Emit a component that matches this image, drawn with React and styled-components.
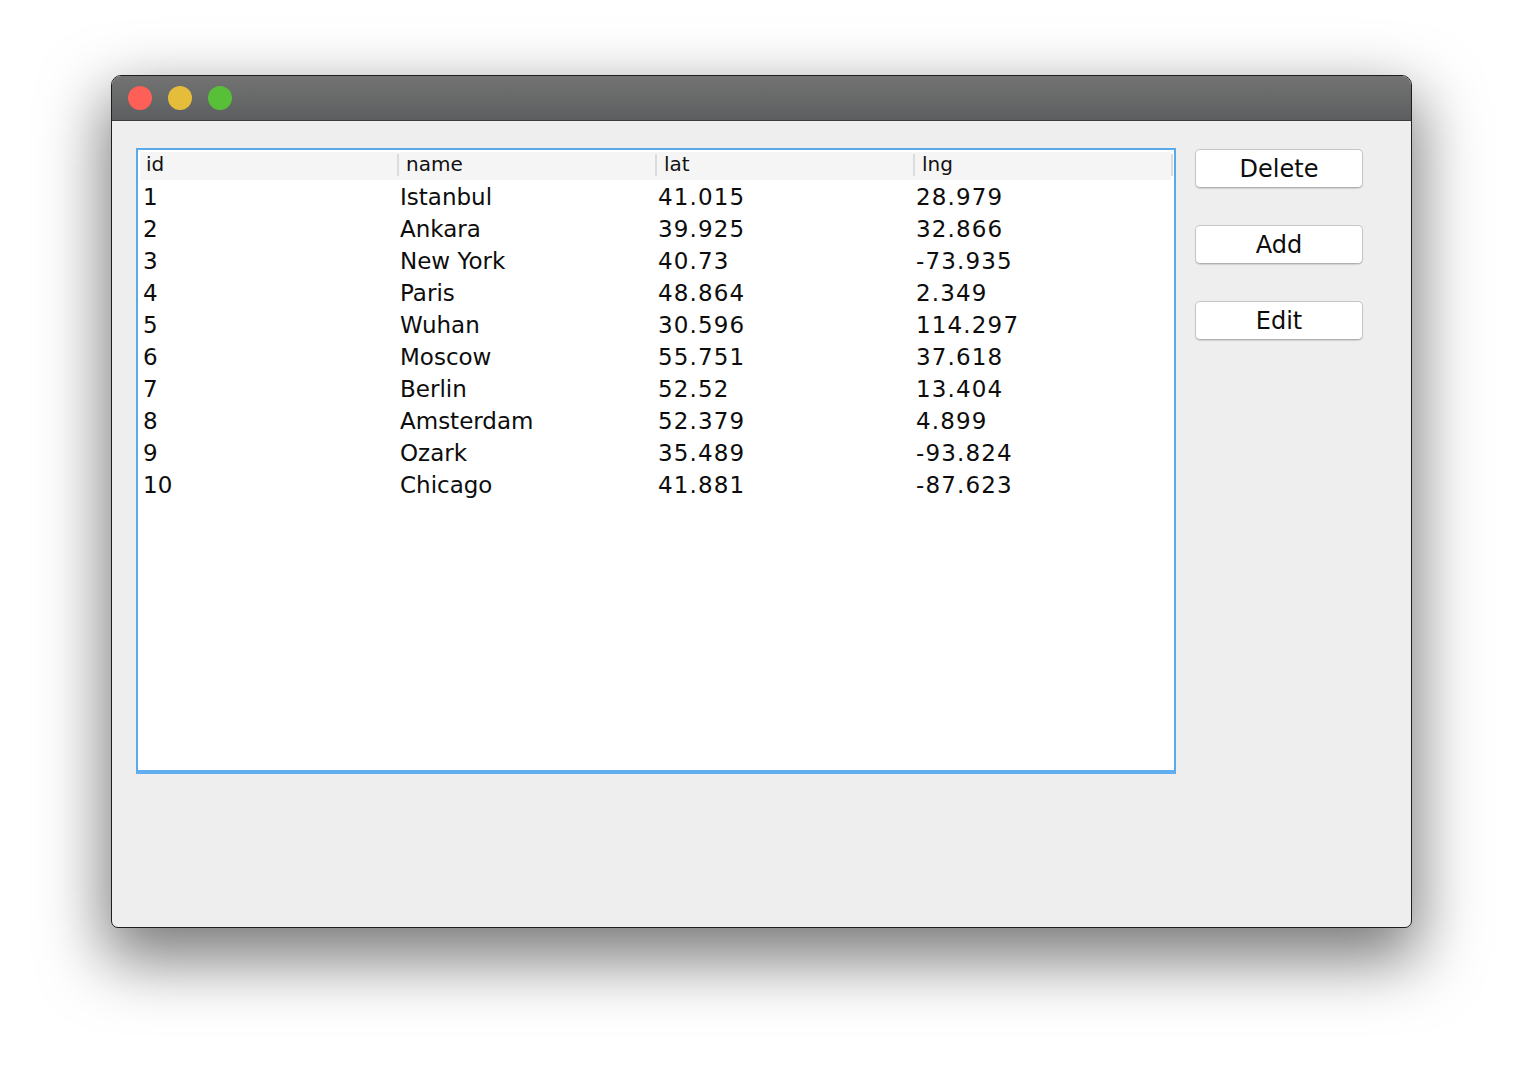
import React from "react";
import styled, { createGlobalStyle } from "styled-components";

const Global = createGlobalStyle`
  html, body { margin: 0; padding: 0; background: #ffffff; }
  body { font-family: "DejaVu Sans", "Liberation Sans", sans-serif; }
`;

const Page = styled.div`
  width: 1524px;
  height: 1076px;
  padding: 75px 0 0 111px;
  box-sizing: border-box;
`;

const Window = styled.div`
  width: 1301px;
  height: 853px;
  box-sizing: border-box;
  border: 1px solid #1e1e1e;
  border-radius: 10px 10px 7px 7px;
  overflow: hidden;
  background: #eeeeee;
  box-shadow: 0 26px 64px 6px rgba(0, 0, 0, 0.52);
  display: flex;
  flex-direction: column;
`;

const TitleBar = styled.div`
  height: 45px;
  flex: none;
  background: linear-gradient(#737373, #5d5e5f);
  border-bottom: 1px solid #3c3c3c;
  display: flex;
  align-items: center;
  gap: 16px;
  padding-left: 16px;
  box-sizing: border-box;
`;

const Light = styled.span`
  width: 24px;
  height: 24px;
  border-radius: 50%;
  background: ${(p) => p.$c};
`;

const Content = styled.div`
  display: flex;
  align-items: flex-start;
  gap: 19px;
  padding: 27px 0 0 24px;
`;

const TableFrame = styled.div`
  width: 1040px;
  height: 626px;
  box-sizing: border-box;
  border: 2px solid #5aa9e9;
  border-bottom: 4px solid #60aef0;
  background: #ffffff;
  padding: 2px 0 0 0;
`;

const Header = styled.div`
  display: grid;
  grid-template-columns: 259px 258px 258px 258px;
  height: 28px;
  margin: 0 2px 0 2px;
  background: #f5f5f5;
  width: 1031px;
`;

const HeadCell = styled.div`
  font-size: 20px;
  color: #111;
  line-height: 25px;
  padding-left: ${(p) => p.$pad}px;
  position: relative;
  &::after {
    content: "";
    position: absolute;
    right: 0;
    top: 2px;
    bottom: 4px;
    width: 2px;
    background: #dcdcdc;
  }
`;

const Row = styled.div`
  display: grid;
  grid-template-columns: 259px 258px 258px 258px;
  height: 32px;
  margin-left: 1px;
`;

const Cell = styled.div`
  font-size: 23px;
  line-height: 35px;
  height: 32px;
  color: #0d0d0d;
  padding-left: ${(p) => p.$pad}px;
  letter-spacing: ${(p) => (p.$num ? "1.15px" : "0")};
  white-space: nowrap;
`;

const Side = styled.div`
  display: flex;
  flex-direction: column;
  gap: 37px;
  padding-top: 1px;
`;

const Button = styled.button`
  width: 168px;
  height: 39px;
  box-sizing: border-box;
  background: #ffffff;
  border: 1px solid #c6c6c6;
  border-bottom-color: #b0b0b0;
  border-radius: 5px;
  box-shadow: 0 1px 1px rgba(0, 0, 0, 0.12);
  font-family: "DejaVu Sans", "Liberation Sans", sans-serif;
  font-size: 24px;
  color: #0d0d0d;
  padding: 1px 0 0 0;
  line-height: 37px;
`;

const rows = [
  [1, "Istanbul", "41.015", "28.979"],
  [2, "Ankara", "39.925", "32.866"],
  [3, "New York", "40.73", "-73.935"],
  [4, "Paris", "48.864", "2.349"],
  [5, "Wuhan", "30.596", "114.297"],
  [6, "Moscow", "55.751", "37.618"],
  [7, "Berlin", "52.52", "13.404"],
  [8, "Amsterdam", "52.379", "4.899"],
  [9, "Ozark", "35.489", "-93.824"],
  [10, "Chicago", "41.881", "-87.623"],
];

export default function App() {
  return (
    <>
      <Global />
      <Page>
        <Window>
          <TitleBar>
            <Light $c="#fe5f57" />
            <Light $c="#e6bd3a" />
            <Light $c="#57c038" />
          </TitleBar>
          <Content>
            <TableFrame>
              <Header>
                <HeadCell $pad={6}>id</HeadCell>
                <HeadCell $pad={7}>name</HeadCell>
                <HeadCell $pad={7}>lat</HeadCell>
                <HeadCell $pad={7}>lng</HeadCell>
              </Header>
              {rows.map((r) => (
                <Row key={r[0]}>
                  <Cell $pad={4}>{r[0]}</Cell>
                  <Cell $pad={2}>{r[1]}</Cell>
                  <Cell $pad={2} $num>{r[2]}</Cell>
                  <Cell $pad={2} $num>{r[3]}</Cell>
                </Row>
              ))}
            </TableFrame>
            <Side>
              <Button>Delete</Button>
              <Button>Add</Button>
              <Button>Edit</Button>
            </Side>
          </Content>
        </Window>
      </Page>
    </>
  );
}
